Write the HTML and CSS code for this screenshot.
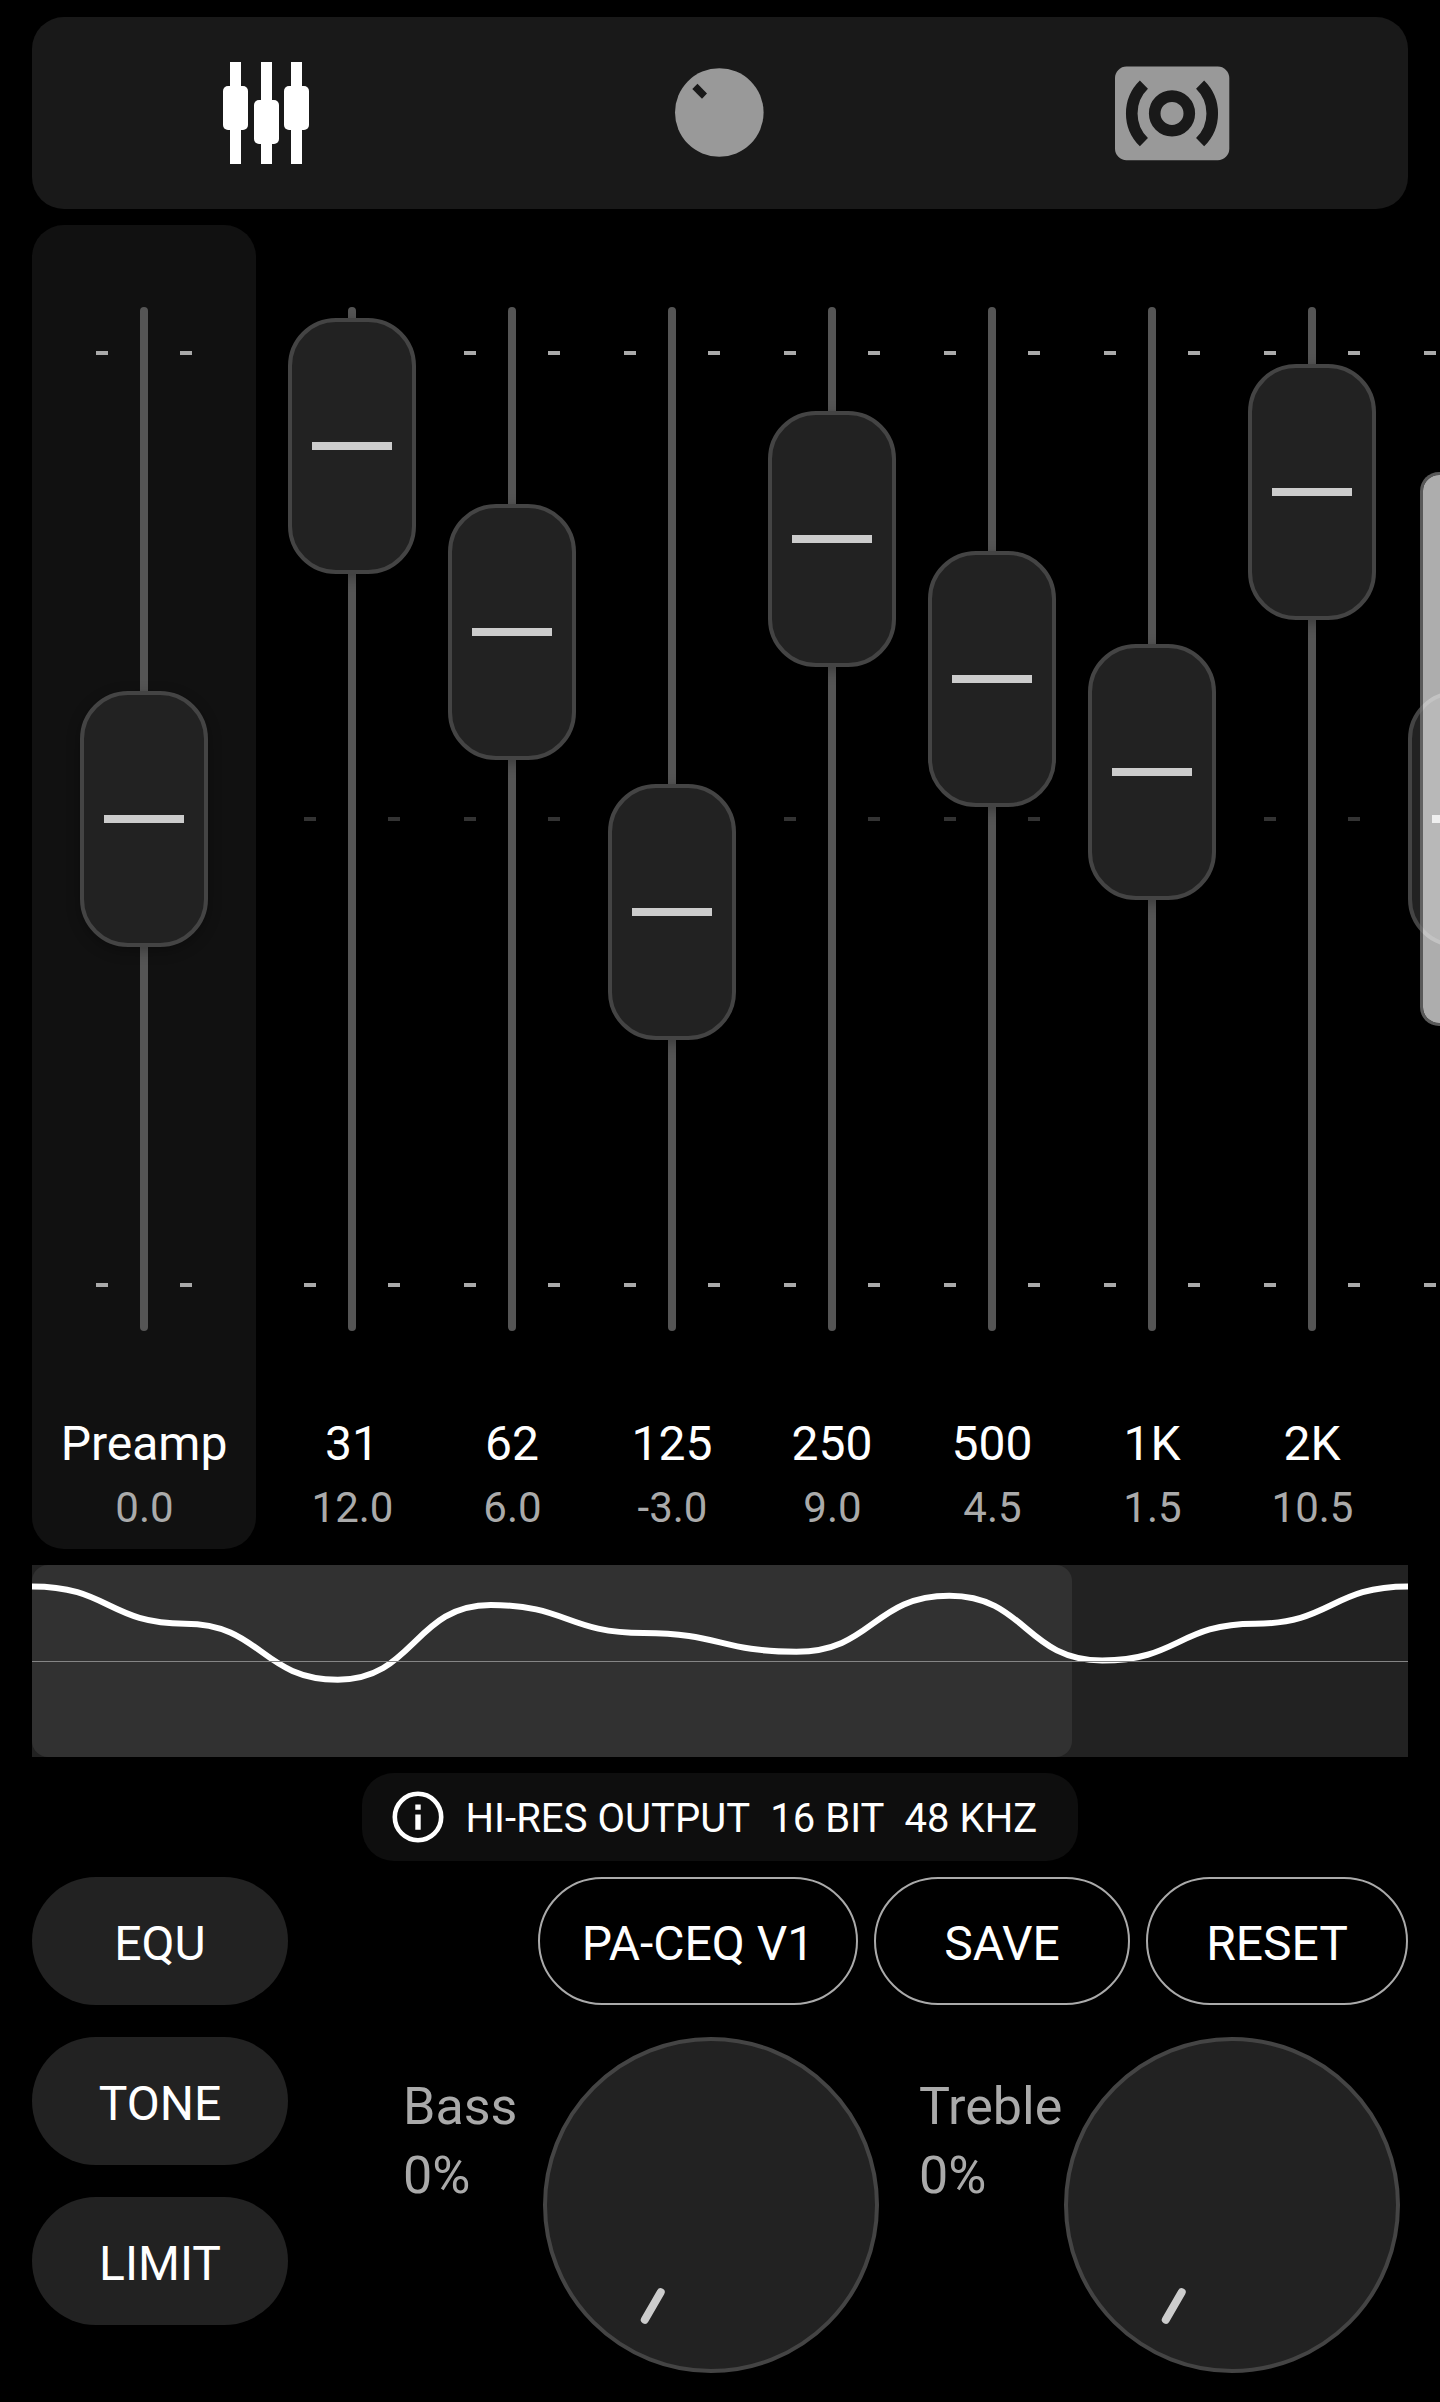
FILE: index.html
```html
<!DOCTYPE html>
<html lang="en">
<head>
<meta charset="utf-8">
<title>Equalizer</title>
<link rel="stylesheet" href="styles.css">
</head>
<body>
<div class="screen">
  <nav class="tabs">
    <svg class="tab tab-active" width="121" height="192" viewBox="206 17 121 192">
      <path d="M230 62h11v102h-11zM261 62h11v102h-11zM291 62h11v102h-11z"/>
      <rect x="223" y="86" width="25" height="44" rx="5"/>
      <rect x="254" y="100" width="25" height="44" rx="5"/>
      <rect x="284" y="86" width="25" height="44" rx="5"/>
    </svg>
    <svg class="tab" width="120" height="192" viewBox="660 17 120 192">
      <circle cx="719.3" cy="112.5" r="44.3"/>
      <path class="cut" d="M692.3 89l5.2-5.3 9.5 9.8-5 5.2z"/>
    </svg>
    <svg class="tab" width="121" height="192" viewBox="1113 17 121 192">
      <rect x="1115" y="66.6" width="114.3" height="93.6" rx="11.5"/>
      <circle class="cut-line" cx="1172" cy="113.4" r="17.3"/>
      <path class="cut-line" d="M1143.9 84.7a40 40 0 0 0 0 57.4M1200.1 84.7a40 40 0 0 1 0 57.4"/>
    </svg>
  </nav>

  <main class="equalizer">
    <section class="band preamp">
      <div class="fader"><i class="thumb"></i></div>
      <div class="name">Preamp</div><div class="gain">0.0</div>
    </section>
    <div class="bands">
      <section class="band"><div class="fader"><i class="thumb" style="--db:12"></i></div><div class="name">31</div><div class="gain">12.0</div></section>
      <section class="band"><div class="fader"><i class="thumb" style="--db:6"></i></div><div class="name">62</div><div class="gain">6.0</div></section>
      <section class="band"><div class="fader"><i class="thumb" style="--db:-3"></i></div><div class="name">125</div><div class="gain">-3.0</div></section>
      <section class="band"><div class="fader"><i class="thumb" style="--db:9"></i></div><div class="name">250</div><div class="gain">9.0</div></section>
      <section class="band"><div class="fader"><i class="thumb" style="--db:4.5"></i></div><div class="name">500</div><div class="gain">4.5</div></section>
      <section class="band"><div class="fader"><i class="thumb" style="--db:1.5"></i></div><div class="name">1K</div><div class="gain">1.5</div></section>
      <section class="band"><div class="fader"><i class="thumb" style="--db:10.5"></i></div><div class="name">2K</div><div class="gain">10.5</div></section>
      <section class="band"><div class="fader"><i class="thumb"></i></div></section>
    </div>
    <div class="edge-handle"></div>
  </main>

  <svg class="curve" width="1376" height="192" viewBox="0 0 1376 192">
    <rect class="curve-view" width="1040" height="192" rx="16"/>
    <path class="curve-line" d="M0 21.4C76.4 21.4 76.4 58.7 152.9 58.7S229.3 114.7 305.8 114.7 382.2 40 458.7 40 535.1 68 611.6 68 688 86.7 764.4 86.7 840.9 30.7 917.3 30.7 993.8 95.5 1070.2 95.5 1146.7 58.7 1223.1 58.7 1299.6 21.4 1376 21.4"/>
    <rect class="curve-zero" y="96" width="1376" height="1"/>
  </svg>

  <div class="output">
    <svg width="60" height="88" viewBox="-30 -44 60 88">
      <circle class="info-ring" r="23.2"/>
      <path class="info-mark" d="M-2.7-12.5h5.4v5.3h-5.4zM-2.7-2.5h5.4v15.2h-5.4z"/>
    </svg>
    <span class="output-text">HI-RES OUTPUT&nbsp; 16 BIT&nbsp; 48 KHZ</span>
  </div>

  <div class="controls">
    <div class="toggles">
      <button class="btn">EQU</button>
      <button class="btn">TONE</button>
      <button class="btn">LIMIT</button>
    </div>
    <div class="side">
      <div class="actions">
        <button class="btn outline preset">PA-CEQ V1</button>
        <button class="btn outline">SAVE</button>
        <button class="btn outline reset">RESET</button>
      </div>
      <div class="knobs">
        <div class="knob-label bass">Bass<br>0%</div>
        <svg class="knob" width="336" height="336" viewBox="-168 -168 336 336"><circle r="166"/><path d="M-50.3 87.2L-66.2 114.7"/></svg>
        <div class="knob-label treble">Treble<br>0%</div>
        <svg class="knob" width="336" height="336" viewBox="-168 -168 336 336"><circle r="166"/><path d="M-50.3 87.2L-66.2 114.7"/></svg>
      </div>
    </div>
  </div>
</div>
</body>
</html>
```
FILE: styles.css
```css
* { box-sizing: border-box; }
body {
  margin: 0;
  background: #000;
  color: #fff;
  font-family: Roboto, sans-serif;
  overflow: hidden;
}
svg { display: block; flex: none; }
.screen {
  width: 1440px;
  height: 2402px;
  padding: 17px 32px 0;
  display: flex;
  flex-direction: column;
  gap: 16px;
}

.tabs {
  display: grid;
  grid-template-columns: 453px 454px 453px;
  justify-content: center;
  justify-items: center;
  height: 192px;
  border-radius: 32px;
  background: #191919;
}
.tab { fill: #999; }
.tab-active { fill: #fff; }
.cut { fill: #191919; }
.cut-line { fill: none; stroke: #191919; stroke-width: 11.6; }
circle.cut-line { fill: #999; }

.equalizer {
  position: relative;
  display: flex;
  gap: 16px;
  height: 1324px;
  margin-right: -32px;
}
.band {
  flex: none;
  width: 160px;
  padding-top: 82px;
  display: flex;
  flex-direction: column;
  align-items: center;
  text-align: center;
}
.preamp { width: 224px; border-radius: 32px; background: #111; }
.bands { flex: 1; min-width: 0; display: flex; overflow: hidden; }
.fader {
  --tick: linear-gradient(#aaa, #aaa);
  --mid: linear-gradient(#333, #333);
  position: relative;
  width: 128px;
  height: 1024px;
  display: flex;
  justify-content: center;
  background:
    var(--tick) 16px 44px, var(--tick) 100px 44px,
    var(--mid) 16px 510px, var(--mid) 100px 510px,
    var(--tick) 16px 976px, var(--tick) 100px 976px;
  background-size: 12px 4px;
  background-repeat: no-repeat;
}
.fader::before { content: ""; width: 8px; border-radius: 4px; background: #555; }
.thumb {
  --db: 0;
  position: absolute;
  left: 0;
  top: calc(384px - var(--db) * 31.1px);
  width: 128px;
  height: 256px;
  border: 4px solid #444;
  border-radius: 48px;
  background: linear-gradient(#ccc, #ccc) center / 80px 8px no-repeat #222;
  box-shadow: 0 4px 14px rgba(0, 0, 0, .3);
}
.name { margin-top: 81px; font-size: 48px; line-height: 64px; }
.gain { margin-top: 2px; padding-left: 1px; font-size: 42px; line-height: 60px; color: #aaa; }
.edge-handle {
  position: absolute;
  right: 0;
  top: 247px;
  width: 20px;
  height: 554px;
  border: 3px solid rgba(119, 119, 119, .75);
  border-right: 0;
  border-radius: 19px 0 0 19px;
  background: rgba(255, 255, 255, .68);
  background-clip: padding-box;
}

.curve { background: #222; }
.curve-view { fill: #313131; }
.curve-line { fill: none; stroke: #fff; stroke-width: 6; }
.curve-zero { fill: #858585; }

.output {
  align-self: center;
  display: flex;
  gap: 17.5px;
  width: 716px;
  height: 88px;
  padding-left: 26px;
  border-radius: 32px;
  background: #0e0e0e;
}
.info-ring { fill: none; stroke: #fff; stroke-width: 4.6; }
.info-mark { fill: #fff; }
.output-text {
  padding-top: 2px;
  font-size: 40px;
  line-height: 88px;
  letter-spacing: .06px;
  white-space: nowrap;
}

.controls { display: flex; justify-content: space-between; }
.toggles { display: flex; flex-direction: column; gap: 32px; }
.btn {
  width: 256px;
  height: 128px;
  padding: 4px 0 0;
  border: 0;
  border-radius: 64px;
  background: #222;
  color: #fff;
  font: 48px Roboto, sans-serif;
}
.outline { border: 2px solid #aaa; background: none; }
.preset { width: 320px; }
.reset { width: 262px; }
.actions { display: flex; justify-content: flex-end; gap: 16px; }
.knobs { display: flex; margin-top: 32px; padding-right: 8px; }
.knob-label { padding-top: 35px; font-size: 52px; line-height: 69px; color: #aaa; }
.bass { width: 140px; }
.treble { width: 145px; margin-left: 40px; }
.knob circle { fill: #222; stroke: #444; stroke-width: 4; }
.knob path { stroke: #ccc; stroke-width: 8; stroke-linecap: round; }
```
